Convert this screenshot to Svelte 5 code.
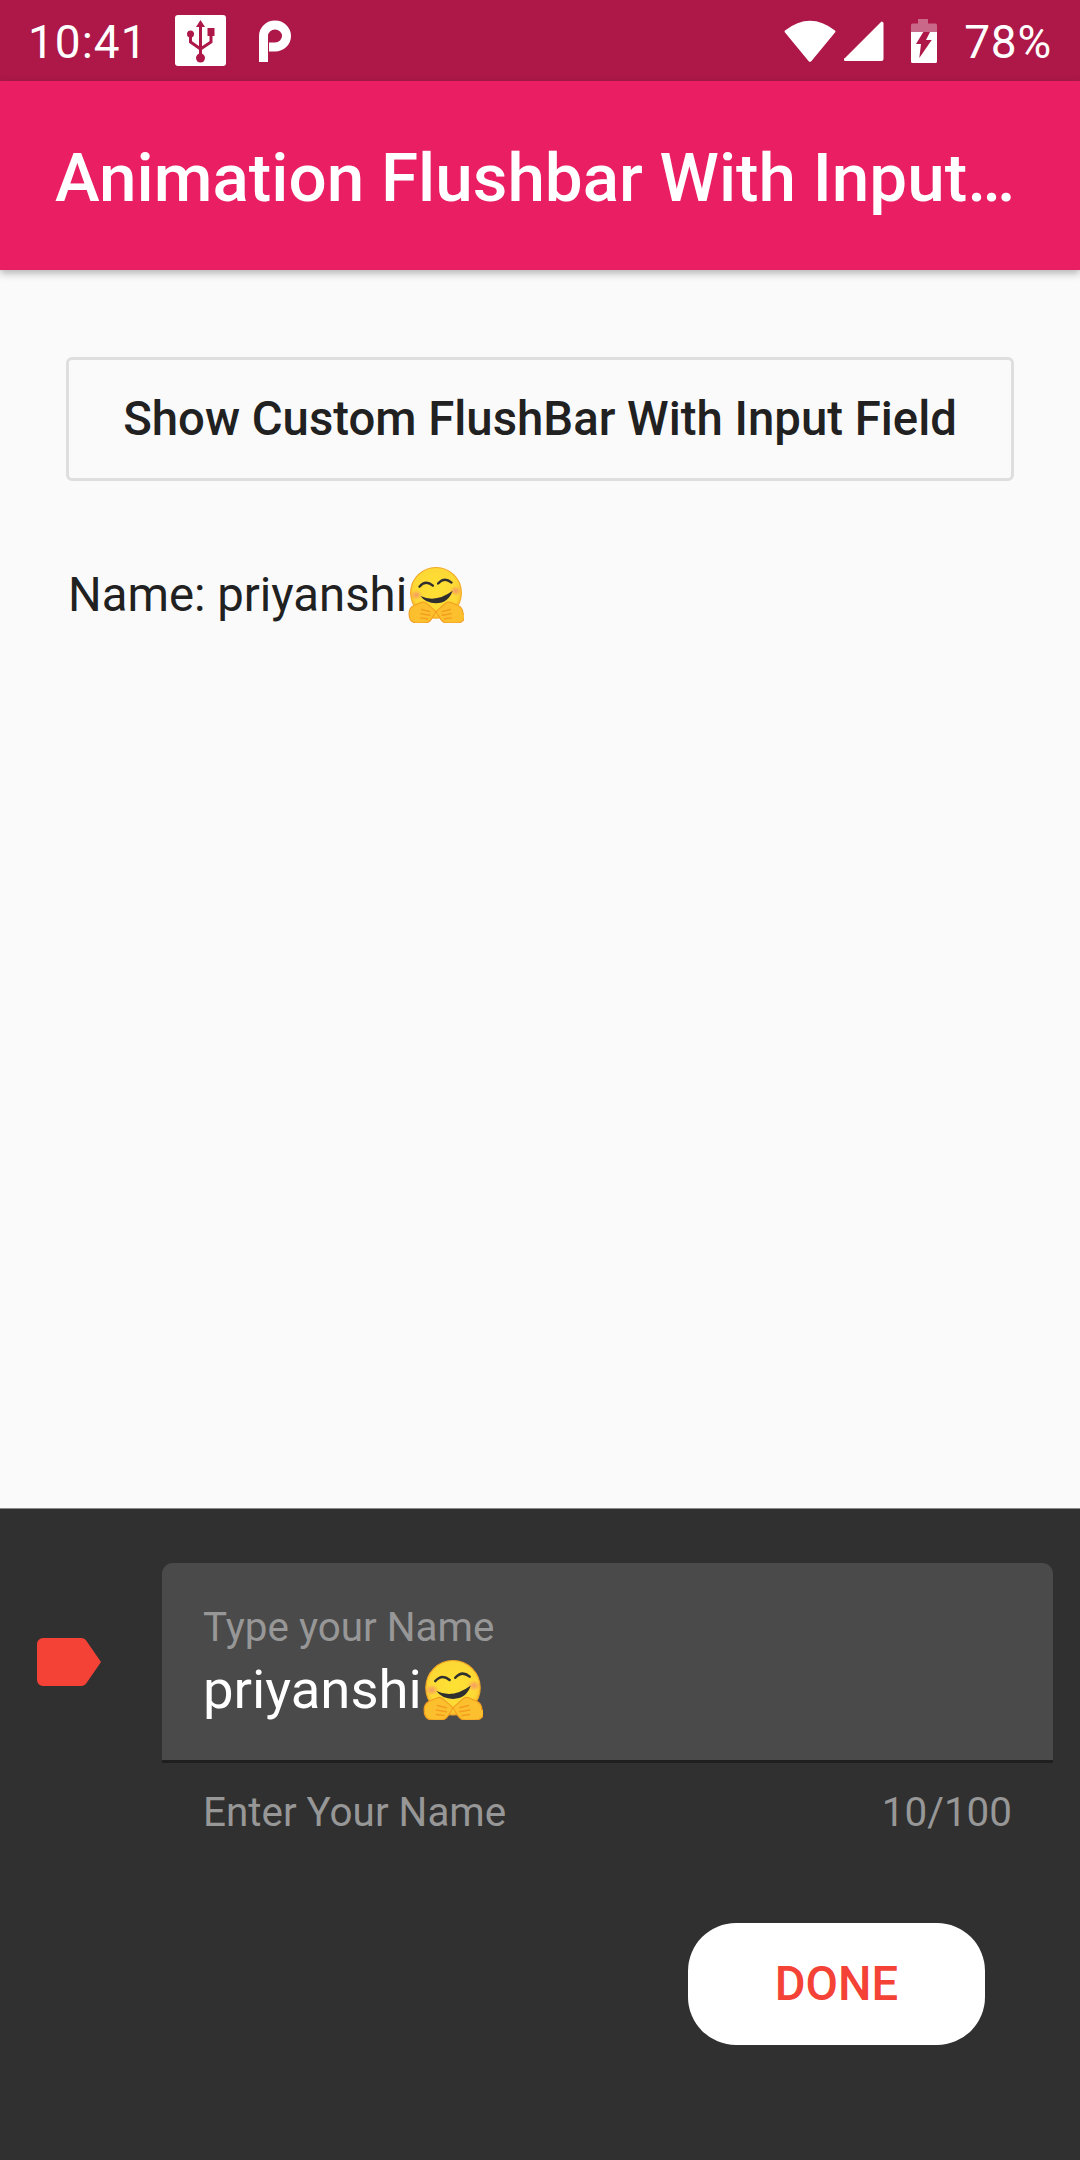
<script>
  let name = 'priyanshi';
  let max = 100;
  let count = (name + '\u{1F917}').length - 1;
</script>

{#snippet hug()}
  <svg class="emoji" viewBox="0 0 54 54" aria-hidden="true">
    <defs>
      <radialGradient id="face" cx="50%" cy="45%" r="55%">
        <stop offset="0" stop-color="#fee133" />
        <stop offset="0.8" stop-color="#fdd835" />
        <stop offset="1" stop-color="#f9b52b" />
      </radialGradient>
      <radialGradient id="cheek">
        <stop offset="0" stop-color="#f48a70" stop-opacity="0.8" />
        <stop offset="1" stop-color="#f48a70" stop-opacity="0" />
      </radialGradient>
    </defs>
    <circle cx="27" cy="25" r="24.500" fill="url(#face)" stroke="#f2a825" stroke-width="1" />
    <ellipse cx="8" cy="27" rx="6" ry="5" fill="url(#cheek)" />
    <ellipse cx="46" cy="23" rx="6" ry="5" fill="url(#cheek)" />
    <path d="M11 19q6-7 13-1M29 16q6-7 13-1" fill="none" stroke="#2f2f2f" stroke-width="2.200" stroke-linecap="round" />
    <path d="M12 28q15 7 31-5q-4 12-16 12q-10 0-15-7z" fill="#2f2f2f" />
    <path d="M1 45q0-6 5-8l7-3q3-1 5 1l8 7q1 1 0 3l-4 6q-2 3-6 3H9q-8 0-8-9z" fill="#fcc02e" stroke="#f39c1f" stroke-width="1" />
    <path d="M53 45q0-6-5-8l-7-3q-3-1-5 1l-8 7q-1 1 0 3l4 6q2 3 6 3h9q8 0 8-9z" fill="#fcc02e" stroke="#f39c1f" stroke-width="1" />
    <path d="M13 41l8 2M12 45l9 1.500M12 49l7 1M41 41l-8 2M42 45l-9 1.500M42 49l-7 1" stroke="#f39c1f" stroke-width="1.300" stroke-linecap="round" />
  </svg>
{/snippet}

<div class="screen">
  <div class="status">
    <span class="clock">10:41</span>
    <svg class="usb" viewBox="0 0 51 51" aria-hidden="true">
      <rect width="51" height="51" rx="3" fill="#fff" />
      <path d="M25.500 5l4.500 7h-9z" fill="#ad1849" />
      <path d="M25.500 10v30M15.500 21v6l10 7M36 20v7l-10.500 7" fill="none" stroke="#ad1849" stroke-width="3" />
      <circle cx="15.500" cy="19" r="3.500" fill="#ad1849" />
      <rect x="32.500" y="13" width="7" height="8" fill="#ad1849" />
      <circle cx="25.500" cy="43" r="4.500" fill="#ad1849" />
    </svg>
    <svg class="park" viewBox="0 0 32 42" aria-hidden="true">
      <path d="M4.500 42V16a11.500 11 0 1 1 11.500 11H10" fill="none" stroke="#fff" stroke-width="9" />
    </svg>
    <span class="spacer"></span>
    <svg class="wifi" viewBox="0 0 52 42" aria-hidden="true">
      <path d="M1 10.500Q26-9 51 10.500a1.500 1.500 0 0 1 0 2L27.500 41a2 2 0 0 1-3 0L1 12.500a1.500 1.500 0 0 1 0-2z" fill="#fff" />
    </svg>
    <svg class="signal" viewBox="0 0 40 40" aria-hidden="true">
      <path d="M37.500 0.500a2 2 0 0 1 2 1.500v36a2 2 0 0 1-2 2H2a1.500 1.500 0 0 1-1-3z" fill="#fff" />
    </svg>
    <svg class="battery" viewBox="0 0 26 44" aria-hidden="true">
      <path d="M7 0h10v4.500h7.500a1.500 1.500 0 0 1 1.500 1.500v7H0V6a1.500 1.500 0 0 1 1.500-1.500H7z" fill="#fff" opacity="0.35" />
      <path fill-rule="evenodd" d="M0 13h26v29.500a1.500 1.500 0 0 1-1.500 1.500h-23A1.500 1.500 0 0 1 0 42.500zM12.300 13L5 25h5L8.300 39l12.400-18H15l4-8z" fill="#fff" />
    </svg>
    <span class="pct">78%</span>
  </div>

  <header class="appbar">
    <h1>Animation Flushbar With Input…</h1>
  </header>

  <main class="content">
    <button class="show-btn">Show Custom FlushBar With Input Field</button>
    <p class="name-line">Name: {name}{@render hug()}</p>
  </main>

  <section class="flushbar">
    <svg class="tag" viewBox="0 0 64 48" aria-hidden="true">
      <path d="M6 0h38q3.500 0 5.500 3L64 24 49.500 45q-2 3-5.500 3H6a6 6 0 0 1-6-6V6a6 6 0 0 1 6-6z" fill="#f44336" />
    </svg>
    <div class="form">
      <div class="field">
        <label for="name-input">Type your Name</label>
        <div class="value" id="name-input">{name}{@render hug()}</div>
      </div>
      <div class="helper">
        <span>Enter Your Name</span>
        <span>{count}/{max}</span>
      </div>
      <button class="done">DONE</button>
    </div>
  </section>
</div>

<style>
  :global(body) {
    margin: 0;
    background: #fafafa;
  }

  .screen {
    display: flex;
    flex-direction: column;
    width: 1080px;
    height: 2160px;
    overflow: hidden;
    font-family: Roboto, sans-serif;
    color: #212121;
  }

  .status {
    display: flex;
    align-items: center;
    flex: none;
    height: 81px;
    padding: 0 28px;
    box-sizing: border-box;
    background: #ad1849;
    color: #fff;
    font-size: 46px;
  }

  .clock {
    letter-spacing: 1px;
    margin: 2px 27px 0 0;
  }

  .usb {
    width: 51px;
    height: 51px;
    margin-right: 33px;
  }

  .park {
    width: 32px;
    height: 42px;
  }

  .spacer {
    flex: 1;
  }

  .wifi {
    width: 52px;
    height: 42px;
    margin-right: 8px;
  }

  .signal {
    width: 40px;
    height: 40px;
    margin-right: 27px;
  }

  .battery {
    width: 26px;
    height: 44px;
    margin-right: 27px;
  }

  .pct {
    letter-spacing: 0.8px;
    margin-top: 2px;
  }

  .appbar {
    flex: none;
    display: flex;
    align-items: center;
    height: 189px;
    padding: 0 55px;
    background: #e91e63;
    box-shadow: 0 3px 8px rgba(0, 0, 0, 0.3);
    position: relative;
  }

  h1 {
    margin: 0;
    color: #fff;
    font-size: 67.400px;
    font-weight: 500;
    white-space: nowrap;
    padding-top: 3px;
  }

  .content {
    flex: 1;
    display: flex;
    flex-direction: column;
    align-items: flex-start;
    padding: 87px 66px 0;
  }

  .show-btn {
    width: 948px;
    height: 124px;
    box-sizing: border-box;
    background: transparent;
    border: 3px solid #dedede;
    border-radius: 6px;
    font-family: inherit;
    font-size: 47.300px;
    font-weight: 500;
    color: #212121;
    padding: 0;
  }

  .name-line {
    display: flex;
    align-items: center;
    margin: 84px 0 0 2px;
    font-size: 47.300px;
    line-height: 60px;
  }

  .name-line .emoji {
    width: 56px;
    height: 56px;
  }

  .emoji {
    width: 60px;
    height: 60px;
    flex: none;
    margin-left: 1px;
  }

  .flushbar {
    flex: none;
    display: flex;
    height: 652px;
    box-sizing: border-box;
    padding: 54px 27px 0 37px;
    background: #303030;
    border-top: 1px solid #8a8a8a;
  }

  .tag {
    flex: none;
    width: 64px;
    height: 48px;
    margin: 75px 61px 0 0;
  }

  .form {
    flex: 1;
    display: flex;
    flex-direction: column;
  }

  .field {
    height: 200px;
    box-sizing: border-box;
    padding: 42px 41px 0;
    background: #4a4a4a;
    border-radius: 11px 11px 0 0;
    border-bottom: 3px solid #1f1f1f;
  }

  label {
    display: block;
    font-size: 40.400px;
    line-height: 46px;
    color: #979797;
  }

  .value {
    display: flex;
    align-items: center;
    margin-top: 6px;
    font-size: 54.500px;
    line-height: 65px;
    color: #fff;
  }

  .helper {
    display: flex;
    justify-content: space-between;
    padding: 27px 41px 0;
    font-size: 40.400px;
    line-height: 46px;
    color: #979797;
  }

  .done {
    align-self: flex-end;
    width: 297px;
    height: 122px;
    margin: 87px 68px 0 0;
    background: #fff;
    border: none;
    border-radius: 48px;
    font-family: inherit;
    font-size: 47.200px;
    font-weight: 500;
    color: #f44336;
    padding: 0;
  }
</style>
